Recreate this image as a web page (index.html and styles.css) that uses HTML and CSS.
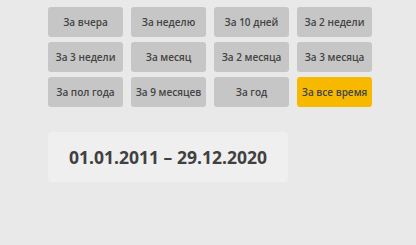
FILE: index.html
```html
<!DOCTYPE html>
<html>
<head>
  <title>Period</title>
  <link rel="stylesheet" href="styles.css">
</head>
<body>
  <div class="period">
    <div class="period-grid">
      <button class="period-btn">За вчера</button>
      <button class="period-btn">За неделю</button>
      <button class="period-btn">За 10 дней</button>
      <button class="period-btn">За 2 недели</button>
      <button class="period-btn">За 3 недели</button>
      <button class="period-btn">За месяц</button>
      <button class="period-btn">За 2 месяца</button>
      <button class="period-btn">За 3 месяца</button>
      <button class="period-btn">За пол года</button>
      <button class="period-btn">За 9 месяцев</button>
      <button class="period-btn">За год</button>
      <button class="period-btn active">За все время</button>
    </div>
    <div class="period-range">01.01.2011 – 29.12.2020</div>
  </div>
</body>
</html>
```

FILE: styles.css
```css
body {
  margin: 0;
  background-color: #e9e9e9;
  font-family: "Open Sans", sans-serif;
  color: #444;
}

.period {
  padding: 7px 0 0 48px;
}

.period-grid {
  display: grid;
  grid-template-columns: repeat(4, 75px);
  column-gap: 8px;
  row-gap: 5px;
}

.period-btn {
  height: 30px;
  padding: 0;
  border: none;
  border-radius: 3px;
  background-color: #c6c6c6;
  color: #444;
  font-family: "Open Sans", sans-serif;
  font-size: 10px;
  font-weight: 600;
  cursor: pointer;
}

.period-btn.active {
  background-color: #f7b900;
}

.period-range {
  width: 240px;
  height: 50px;
  margin-top: 25px;
  border-radius: 4px;
  background-color: #efefef;
  display: flex;
  align-items: center;
  justify-content: center;
  font-size: 17.5px;
  font-weight: 700;
  color: #404040;
}
```
